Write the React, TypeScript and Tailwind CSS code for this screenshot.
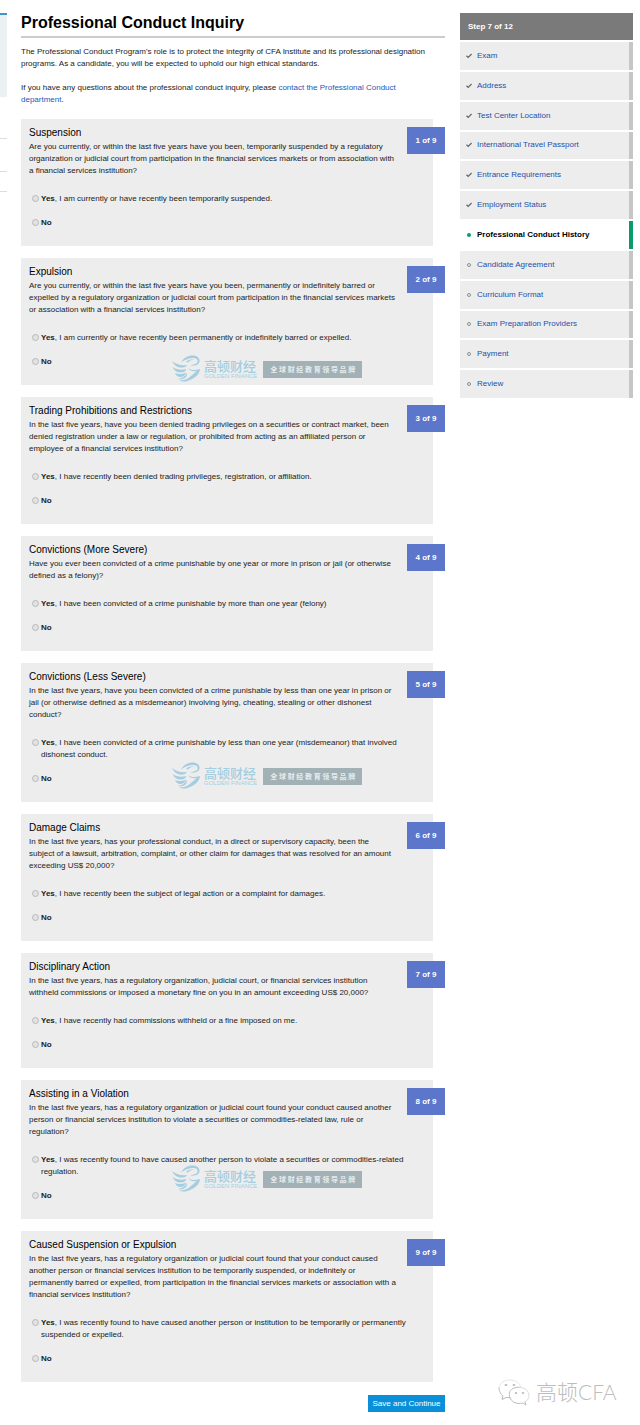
import { useState } from "react";
import type { FormEvent } from "react";

type Question = {
  title: string;
  text: string;
  yes: string;
  watermark?: string;
};

const questions: Question[] = [
  {
    title: "Suspension",
    text: "Are you currently, or within the last five years have you been, temporarily suspended by a regulatory\norganization or judicial court from participation in the financial services markets or from association with\na financial services institution?",
    yes: "I am currently or have recently been temporarily suspended.",
  },
  {
    title: "Expulsion",
    text: "Are you currently, or within the last five years have you been, permanently or indefinitely barred or\nexpelled by a regulatory organization or judicial court from participation in the financial services markets\nor association with a financial services institution?",
    yes: "I am currently or have recently been permanently or indefinitely barred or expelled.",
    watermark: "top-[97px]",
  },
  {
    title: "Trading Prohibitions and Restrictions",
    text: "In the last five years, have you been denied trading privileges on a securities or contract market, been\ndenied registration under a law or regulation, or prohibited from acting as an affiliated person or\nemployee of a financial services institution?",
    yes: "I have recently been denied trading privileges, registration, or affiliation.",
  },
  {
    title: "Convictions (More Severe)",
    text: "Have you ever been convicted of a crime punishable by one year or more in prison or jail (or otherwise\ndefined as a felony)?",
    yes: "I have been convicted of a crime punishable by more than one year (felony)",
  },
  {
    title: "Convictions (Less Severe)",
    text: "In the last five years, have you been convicted of a crime punishable by less than one year in prison or\njail (or otherwise defined as a misdemeanor) involving lying, cheating, stealing or other dishonest\nconduct?",
    yes: "I have been convicted of a crime punishable by less than one year (misdemeanor) that involved\ndishonest conduct.",
    watermark: "top-[99px]",
  },
  {
    title: "Damage Claims",
    text: "In the last five years, has your professional conduct, in a direct or supervisory capacity, been the\nsubject of a lawsuit, arbitration, complaint, or other claim for damages that was resolved for an amount\nexceeding US$ 20,000?",
    yes: "I have recently been the subject of legal action or a complaint for damages.",
  },
  {
    title: "Disciplinary Action",
    text: "In the last five years, has a regulatory organization, judicial court, or financial services institution\nwithheld commissions or imposed a monetary fine on you in an amount exceeding US$ 20,000?",
    yes: "I have recently had commissions withheld or a fine imposed on me.",
  },
  {
    title: "Assisting in a Violation",
    text: "In the last five years, has a regulatory organization or judicial court found your conduct caused another\nperson or financial services institution to violate a securities or commodities-related law, rule or\nregulation?",
    yes: "I was recently found to have caused another person to violate a securities or commodities-related\nregulation.",
    watermark: "top-[85px]",
  },
  {
    title: "Caused Suspension or Expulsion",
    text: "In the last five years, has a regulatory organization or judicial court found that your conduct caused\nanother person or financial services institution to be temporarily suspended, or indefinitely or\npermanently barred or expelled, from participation in the financial services markets or association with a\nfinancial services institution?",
    yes: "I was recently found to have caused another person or institution to be temporarily or permanently\nsuspended or expelled.",
  },
];

const steps = [
  "Exam",
  "Address",
  "Test Center Location",
  "International Travel Passport",
  "Entrance Requirements",
  "Employment Status",
  "Professional Conduct History",
  "Candidate Agreement",
  "Curriculum Format",
  "Exam Preparation Providers",
  "Payment",
  "Review",
];

const currentStep = 6;

function StepIcon({ index }: { index: number }) {
  if (index < currentStep) {
    return (
      <svg viewBox="0 0 6 6" className="size-[6px]" fill="none" stroke="#666" strokeWidth="1.3" aria-hidden="true">
        <path d="M0.5 2.8 2.2 4.4 5.6 1" />
      </svg>
    );
  }
  if (index === currentStep) {
    return <span className="mx-px size-1 rounded-full bg-[#0a9a6c]" />;
  }
  return <span className="mx-px size-1 rounded-full border border-[#8f8f8f]" />;
}

function GoldenFinanceMark({ className }: { className: string }) {
  return (
    <div className={`pointer-events-none absolute left-[150px] flex items-center ${className}`} aria-hidden="true">
      <svg viewBox="0 0 30 28" className="h-7 w-[30px]" fill="#a5cde0">
        <path d="M1 6c4 3 8 5 15 4-1 2-3 2.500-6 2.500C6 12.500 3 10 1 6Z" />
        <path d="M1.500 12c4 2.500 8 3.500 14 2-1 2.500-3 3.500-6 3.500-4 0-6.500-2-8-5.500Z" />
        <path d="M4 18c3 1.500 7 1.500 11-0.500-1 3-3 4.500-5.500 4.500-2.500 0-4.500-1.500-5.500-4Z" />
        <path d="M10 7.500C13 2 19-0.500 24 0.800c5 1.400 6 6.200 2.500 8.700-2.500 1.500-5 0.500-7 2 2-3 6-1.500 7-4.500 0.800-3-2-4.500-5.500-4C17 3.500 13.500 5 10 7.500Z" />
        <path d="M15 7c2-2 5-3 8-2.500-2.500 0.300-4.500 1.300-6 3Z" />
        <path d="M17 13c3 2.500 7 2.500 12 1-0.500 5-4 8-8 10-4 2.500-9 3.500-13 1.500 5 0 9-1.500 12-4.500 2-2 4-3 5.500-5-3.500 0.800-6.500 0-8.500-3Z" />
        <path d="M7 24c4-0.500 7-2.500 9-6 0.500 4-3.500 7.500-9 6Z" />
      </svg>
      <div className="ml-[3px] whitespace-nowrap text-[#a5cde0]">
        <p className="font-['Noto_Sans_CJK_SC',sans-serif] text-[13px] leading-[14px] font-medium">高顿财经</p>
        <p className="text-[6px] leading-[7px]">GOLDEN FINANCE</p>
      </div>
      <p className="ml-[6px] flex h-[17px] w-[99px] items-center justify-between bg-[#a2b1b5] px-[7px] font-['Noto_Sans_CJK_SC',sans-serif] text-[7px] font-bold text-[#e6ecee]">
        {Array.from("全球财经教育领导品牌").map((char) => (
          <span key={char}>{char}</span>
        ))}
      </p>
    </div>
  );
}

function WeChatMark() {
  return (
    <div className="flex items-center text-[#bdbdbd]">
      <svg
        viewBox="0 0 32 28"
        className="h-7 w-8"
        fill="none"
        stroke="currentColor"
        strokeLinecap="round"
        strokeLinejoin="round"
        aria-hidden="true"
      >
        <path stroke="#e6e6e6" d="M1 10C2 5 6 2 12 2c5.500 0 9.500 3 11 7" />
        <path d="M1 10c0 3.500 1.500 6 4 8l-1 3.500L8 19.500h4" />
        <path d="M12 20c-2-4.500 0-9 5-10.300 1.500-0.500 3-0.600 4.500-0.400" />
        <path stroke="#dcdcdc" d="M21.500 9.300c5.500 0.300 9.500 3.700 9.500 8.200 0 2.500-1.500 5-4 6.500" />
        <path d="M12 20c1.500 3.500 5 5.500 9 5.500 1.200 0 2.400-0.200 3.500-0.500l3.500 2-1-3" />
        <g fill="currentColor" stroke="none">
          <ellipse cx="8" cy="7" rx="1.500" ry="1" />
          <ellipse cx="16" cy="7" rx="1.500" ry="1" />
          <ellipse cx="18" cy="15" rx="1.300" ry="0.900" />
          <ellipse cx="25" cy="15" rx="1.300" ry="0.900" />
        </g>
      </svg>
      <span className="ml-[6px] whitespace-nowrap font-[Lato,'Noto_Sans_CJK_SC',sans-serif] text-[21px] leading-7 font-light">
        高顿CFA
      </span>
    </div>
  );
}

type OptionProps = {
  name: string;
  value: string;
  checked: boolean;
  onSelect: (value: string) => void;
  text?: string;
};

function Option({ name, value, checked, onSelect, text }: OptionProps) {
  return (
    <label className="flex items-start gap-[2px] pl-[3px]">
      <input
        type="radio"
        name={name}
        value={value}
        checked={checked}
        onChange={() => onSelect(value)}
        className="mt-[2px] size-[7px] shrink-0 appearance-none rounded-full border border-[#b9b9b9] bg-[#e2e2e2] checked:bg-[#555]"
      />
      <span className="whitespace-pre-line">
        <b>{value}</b>
        {text ? `, ${text}` : null}
      </span>
    </label>
  );
}

function QuestionCard({ question, index }: { question: Question; index: number }) {
  const [answer, setAnswer] = useState("");
  const name = `question-${index + 1}`;

  return (
    <section className="relative mr-3 bg-[#ededed] px-2 pt-[6px] pb-[17px]">
      <h2 className="text-[10px] leading-4 text-black">{question.title}</h2>
      <p className="whitespace-pre-line">{question.text}</p>
      <div className="mt-4 flex flex-col gap-3" role="radiogroup" aria-label={question.title}>
        <Option name={name} value="Yes" checked={answer === "Yes"} onSelect={setAnswer} text={question.yes} />
        <Option name={name} value="No" checked={answer === "No"} onSelect={setAnswer} />
      </div>
      <span className="absolute top-2 -right-3 flex h-[27px] w-[38px] items-center justify-center bg-[#5b76cb] font-bold text-white">
        {index + 1} of {questions.length}
      </span>
      {question.watermark ? <GoldenFinanceMark className={question.watermark} /> : null}
    </section>
  );
}

export default function App() {
  function handleSubmit(event: FormEvent) {
    event.preventDefault();
  }

  return (
    <div className="flex bg-white pt-[13px] pr-[7px] font-['Liberation_Sans',Arial,sans-serif] text-[8px] leading-3 text-[#222]">
      <div className="w-[7px] shrink-0">
        <div className="h-[84px] border-t-2 border-[#3f94c8] bg-[#ebf0f3]" />
        <div className="h-[42px] border-b border-[#ddd]" />
        <div className="h-[33px] border-b border-[#ddd]" />
        <div className="h-5 border-b border-[#ddd]" />
      </div>

      <form onSubmit={handleSubmit} className="ml-[14px] min-w-0 flex-1">
        <h1 className="border-b-2 border-[#ccc] pb-[3px] text-[16px] leading-5 font-bold text-black">
          Professional Conduct Inquiry
        </h1>
        <p className="mt-2">
          The Professional Conduct Program's role is to protect the integrity of CFA Institute and its professional designation
          <br />
          programs. As a candidate, you will be expected to uphold our high ethical standards.
        </p>
        <p className="mt-3">
          If you have any questions about the professional conduct inquiry, please{" "}
          <a href="#contact" className="text-[#2358b8]">
            contact the Professional Conduct
            <br />
            department
          </a>
          .
        </p>
        <div className="mt-[13px] flex flex-col gap-3">
          {questions.map((question, index) => (
            <QuestionCard key={question.title} question={question} index={index} />
          ))}
        </div>
        <div className="mt-[13px] flex justify-end pb-3">
          <button type="submit" className="h-[17px] w-[77px] whitespace-nowrap bg-[#0a8fd8] text-white">
            Save and Continue
          </button>
        </div>
      </form>

      <aside className="ml-[15px] flex w-[173px] shrink-0 flex-col">
        <h2 className="flex h-[27px] items-center bg-[#7a7a7a] px-2 font-bold text-white">Step 7 of 12</h2>
        <nav aria-label="Registration steps">
          <ol className="mt-[2px] grid h-[356px] auto-rows-fr gap-[2px]">
            {steps.map((step, index) => (
              <li
                key={step}
                className={
                  index === currentStep
                    ? "flex items-center border-r-4 border-[#0a9a6c] pl-[6px] font-bold text-black"
                    : "flex items-center border-r-4 border-[#c6c6c6] bg-[#ededed] pl-[6px] text-[#2450ac]"
                }
              >
                <StepIcon index={index} />
                <a href="#step" className="ml-[5px]" aria-current={index === currentStep ? "step" : undefined}>
                  {step}
                </a>
              </li>
            ))}
          </ol>
        </nav>
        <div className="mt-auto pb-[18px] pl-[38px]">
          <WeChatMark />
        </div>
      </aside>
    </div>
  );
}
